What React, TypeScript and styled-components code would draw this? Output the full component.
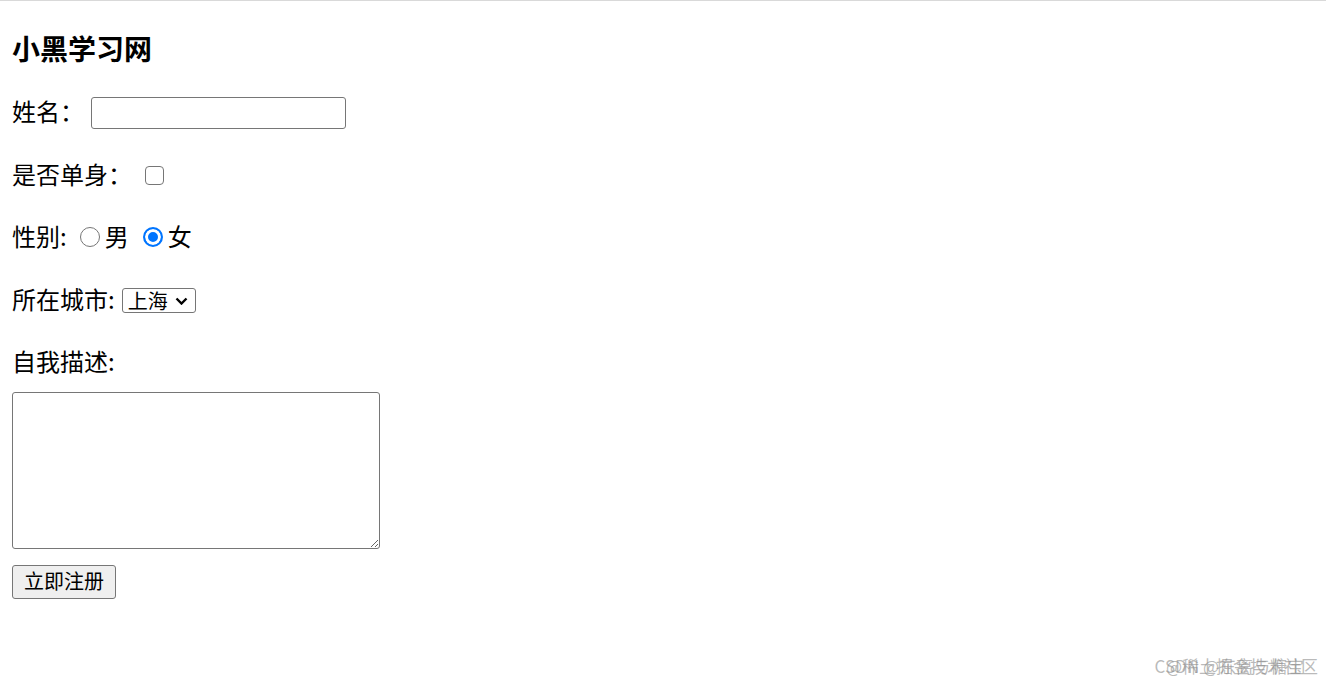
import React from "react";
import styled, { createGlobalStyle } from "styled-components";

const Global = createGlobalStyle`
  html, body { margin: 0; padding: 0; background: #fff; }
  body {
    font-family: "Noto Sans CJK SC", "Microsoft YaHei", sans-serif;
    color: #000;
  }
`;

const Page = styled.div`
  border-top: 1px solid #d9d9d9;
  padding: 0 12px;
  min-height: 685px;
  box-sizing: border-box;
  position: relative;
`;

const Title = styled.h3`
  margin: 27px 0 0;
  font-size: 28px;
  line-height: 40px;
  font-weight: 700;
`;

const Form = styled.form`
  display: flex;
  flex-direction: column;
  align-items: flex-start;
`;

const Row = styled.div<{ $top: number }>`
  display: flex;
  align-items: center;
  height: 32px;
  margin-top: ${(p) => p.$top}px;
  font-size: 24px;
  line-height: 32px;
`;

const Label = styled.span`
  font-size: 24px;
  line-height: 28px;
  padding-bottom: 4px;
  white-space: pre;
`;

const TextInput = styled.input`
  box-sizing: border-box;
  width: 255px;
  height: 32px;
  margin-left: 7px;
  border: 1px solid #767676;
  border-radius: 3px;
  background: #fff;
  outline: none;
  font-size: 20px;
  padding: 0 4px;
`;

const Check = styled.input`
  appearance: none;
  box-sizing: border-box;
  width: 19px;
  height: 19px;
  margin: -1px 0 0 13px;
  border: 1.5px solid #767676;
  border-radius: 4px;
  background: #fff;
`;

const Radio = styled.input<{ $gap: number }>`
  appearance: none;
  box-sizing: border-box;
  width: 20px;
  height: 20px;
  margin: -2px 5px 0 ${(p) => p.$gap}px;
  border: 1.5px solid #767676;
  border-radius: 50%;
  background: #fff;
  &:checked {
    border: 2px solid #0075ff;
    background: #0075ff;
    box-shadow: inset 0 0 0 3px #fff;
  }
`;

const SelectWrap = styled.span`
  position: relative;
  display: inline-flex;
  margin-left: 7px;
`;

const Select = styled.select`
  appearance: none;
  box-sizing: border-box;
  width: 74px;
  height: 25px;
  border: 1px solid #767676;
  border-radius: 3px;
  background: #fff;
  padding: 0 0 0 5px;
  font-family: "Noto Sans CJK SC", sans-serif;
  font-size: 20px;
  line-height: 23px;
  color: #000;
  outline: none;
`;

const Chevron = styled.svg`
  position: absolute;
  right: 8px;
  top: 9px;
  pointer-events: none;
`;

const Area = styled.textarea`
  display: block;
  box-sizing: border-box;
  width: 368px;
  height: 157px;
  margin-top: 13px;
  border: 1px solid #767676;
  border-radius: 3px;
  outline: none;
`;

const Submit = styled.button`
  box-sizing: border-box;
  width: 104px;
  height: 34px;
  margin-top: 16px;
  padding: 0 0 2px;
  border: 1px solid #767676;
  border-radius: 3px;
  background: #efefef;
  font-family: "Noto Sans CJK SC", sans-serif;
  font-size: 20px;
  line-height: 28px;
  color: #000;
`;

const Watermark = styled.div`
  position: absolute;
  right: 8px;
  bottom: 8px;
  width: 180px;
  height: 22px;
  pointer-events: none;
`;

const Mark = styled.span<{ $right: number }>`
  position: absolute;
  right: ${(p) => p.$right}px;
  top: 0;
  white-space: nowrap;
  font-family: "Noto Sans CJK SC", sans-serif;
  font-size: 17px;
  line-height: 22px;
  color: rgba(140, 140, 140, 0.6);
`;

export default function App() {
  return (
    <>
      <Global />
      <Page>
        <Title>小黑学习网</Title>
        <Form onSubmit={(e) => e.preventDefault()}>
          <Row $top={29}>
            <Label>姓名：</Label>
            <TextInput type="text" />
          </Row>
          <Row $top={30.5}>
            <Label>是否单身：</Label>
            <Check type="checkbox" />
          </Row>
          <Row $top={30.5}>
            <Label>性别:</Label>
            <Radio type="radio" name="gender" $gap={13} />
            <Label>男</Label>
            <Radio type="radio" name="gender" $gap={14} defaultChecked />
            <Label>女</Label>
          </Row>
          <Row $top={30.5}>
            <Label>所在城市:</Label>
            <SelectWrap>
              <Select defaultValue="上海">
                <option>北京</option>
                <option>上海</option>
                <option>广州</option>
              </Select>
              <Chevron width="13" height="8" viewBox="0 0 13 8">
                <path d="M1.5 1.5 L6.5 6.5 L11.5 1.5" fill="none" stroke="#000" strokeWidth="2.4" />
              </Chevron>
            </SelectWrap>
          </Row>
          <Row $top={30.5}>
            <Label>自我描述:</Label>
          </Row>
          <Area />
          <Submit type="submit">立即注册</Submit>
        </Form>
        <Watermark>
          <Mark $right={14}>CSDN @东离与糖宝</Mark>
          <Mark $right={0}>@稀土掘金技术社区</Mark>
        </Watermark>
      </Page>
    </>
  );
}
